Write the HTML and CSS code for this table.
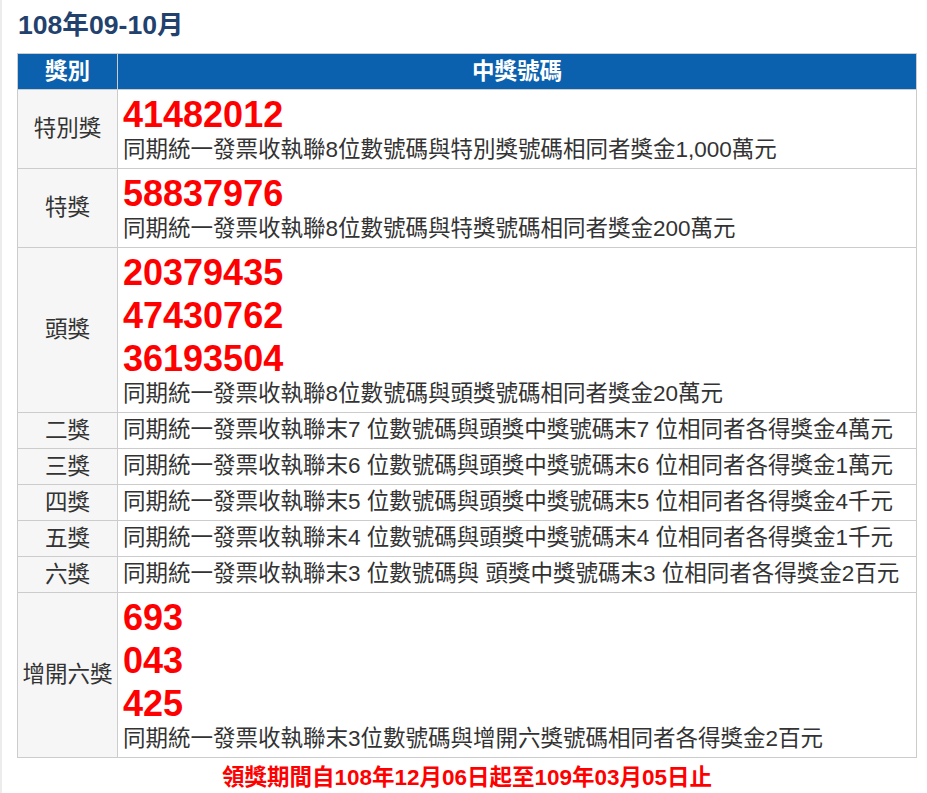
FILE: index.html
```html
<!DOCTYPE html>
<html lang="zh-Hant">
<head>
<meta charset="utf-8">
<title>統一發票中獎號碼</title>
<link rel="stylesheet" href="styles.css">
</head>
<body>
<div class="page">
  <h2 class="title">108年09-10月</h2>
  <table class="prize">
    <thead>
      <tr><th class="col-name">獎別</th><th>中獎號碼</th></tr>
    </thead>
    <tbody>
      <tr>
        <td class="name">特別獎</td>
        <td class="content">
          <div class="num">41482012</div>
          <div class="desc">同期統一發票收執聯8位數號碼與特別獎號碼相同者獎金1,000萬元</div>
        </td>
      </tr>
      <tr>
        <td class="name">特獎</td>
        <td class="content">
          <div class="num">58837976</div>
          <div class="desc">同期統一發票收執聯8位數號碼與特獎號碼相同者獎金200萬元</div>
        </td>
      </tr>
      <tr>
        <td class="name">頭獎</td>
        <td class="content">
          <div class="num">20379435</div>
          <div class="num">47430762</div>
          <div class="num">36193504</div>
          <div class="desc">同期統一發票收執聯8位數號碼與頭獎號碼相同者獎金20萬元</div>
        </td>
      </tr>
      <tr>
        <td class="name">二獎</td>
        <td class="content"><div class="desc">同期統一發票收執聯末7 位數號碼與頭獎中獎號碼末7 位相同者各得獎金4萬元</div></td>
      </tr>
      <tr>
        <td class="name">三獎</td>
        <td class="content"><div class="desc">同期統一發票收執聯末6 位數號碼與頭獎中獎號碼末6 位相同者各得獎金1萬元</div></td>
      </tr>
      <tr>
        <td class="name">四獎</td>
        <td class="content"><div class="desc">同期統一發票收執聯末5 位數號碼與頭獎中獎號碼末5 位相同者各得獎金4千元</div></td>
      </tr>
      <tr>
        <td class="name">五獎</td>
        <td class="content"><div class="desc">同期統一發票收執聯末4 位數號碼與頭獎中獎號碼末4 位相同者各得獎金1千元</div></td>
      </tr>
      <tr>
        <td class="name">六獎</td>
        <td class="content"><div class="desc">同期統一發票收執聯末3 位數號碼與 頭獎中獎號碼末3 位相同者各得獎金2百元</div></td>
      </tr>
      <tr>
        <td class="name">增開六獎</td>
        <td class="content">
          <div class="num">693</div>
          <div class="num">043</div>
          <div class="num">425</div>
          <div class="desc">同期統一發票收執聯末3位數號碼與增開六獎號碼相同者各得獎金2百元</div>
        </td>
      </tr>
    </tbody>
  </table>
  <p class="period">領獎期間自108年12月06日起至109年03月05日止</p>
</div>
</body>
</html>
```

FILE: styles.css
```css
html, body {
  margin: 0;
  padding: 0;
  background: #ffffff;
}

body {
  font-family: "Liberation Sans", Arial, "Noto Sans CJK TC", sans-serif;
  color: #333333;
}

.page {
  border-left: 2px solid #ececec;
  min-height: 793px;
  box-sizing: border-box;
  padding: 9px 0 0 15px;
}

.title {
  margin: 0 0 12px 1px;
  font-size: 26.6px;
  line-height: 32px;
  font-weight: bold;
  color: #22416d;
}

.prize {
  width: 900px;
  border-collapse: collapse;
  font-size: 22.5px;
}

.prize th,
.prize td {
  border: 1px solid #cccccc;
}

.prize th {
  background: #0c61ae;
  color: #ffffff;
  font-weight: bold;
  height: 35px;
  padding: 0;
  line-height: 28px;
  text-align: center;
}

.prize .col-name {
  width: 99px;
}

.prize .name {
  background: #f6f6f6;
  text-align: center;
  vertical-align: middle;
  padding: 0;
  line-height: 28px;
  color: #333333;
}

.prize .content {
  padding: 3px 5px 4px 5px;
  vertical-align: top;
}

.num {
  color: #ff0000;
  font-weight: bold;
  font-size: 36px;
  line-height: 43px;
}

.desc {
  line-height: 28px;
  white-space: nowrap;
}

.period {
  width: 900px;
  margin: 6px 0 0 0;
  text-align: center;
  font-size: 22.5px;
  line-height: 28px;
  font-weight: bold;
  color: #ff0000;
}
```
